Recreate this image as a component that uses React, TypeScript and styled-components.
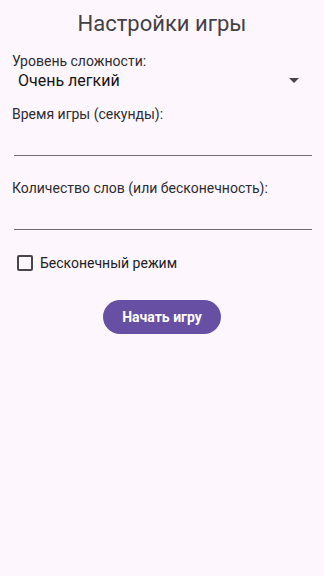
import styled, { createGlobalStyle } from 'styled-components';

const GlobalStyle = createGlobalStyle`
    html, body {
        margin: 0;
        padding: 0;
        background: #fdf7fd;
        font-family: Roboto, "Noto Sans", sans-serif;
    }
`;

const Screen = styled.div`
    width: 324px;
    min-height: 576px;
    box-sizing: border-box;
    padding: 10px 12px 0 12px;
    display: flex;
    flex-direction: column;
`;

const Title = styled.h1`
    margin: 0;
    font-size: 22px;
    font-weight: 400;
    color: #434146;
    text-align: center;
    line-height: 28px;
`;

const Label = styled.div<{ $top: number }>`
    margin-top: ${(p) => p.$top}px;
    font-size: 14px;
    color: #2e2c30;
    line-height: 18px;
`;

const Spinner = styled.div`
    display: flex;
    align-items: center;
    justify-content: space-between;
    padding: 0 13px 0 6px;
    height: 20px;
    font-size: 16px;
    color: #141414;
`;

const Arrow = styled.span`
    width: 0;
    height: 0;
    border-left: 5px solid transparent;
    border-right: 5px solid transparent;
    border-top: 5px solid #49454f;
`;

const Field = styled.div`
    margin: 0 0 0 2px;
    height: 32px;
    border-bottom: 1.5px solid #6f6c72;
`;

const CheckRow = styled.label`
    display: flex;
    align-items: center;
    gap: 7px;
    margin-top: 25px;
    padding-left: 5px;
    font-size: 14px;
    color: #222024;
`;

const Box = styled.span`
    width: 12px;
    height: 12px;
    border: 2px solid #49454f;
    border-radius: 2px;
`;

const StartButton = styled.button`
    align-self: center;
    margin-top: 29px;
    width: 118px;
    height: 34px;
    border: none;
    border-radius: 17px;
    background: #6750a4;
    color: #ffffff;
    font-family: Roboto, "Noto Sans", sans-serif;
    font-size: 14px;
    font-weight: 700;
`;

const App = () => {
    return (
        <>
            <GlobalStyle />
            <Screen>
                <Title>Настройки игры</Title>
                <Label $top={14}>Уровень сложности:</Label>
                <Spinner>
                    <span>Очень легкий</span>
                    <Arrow />
                </Spinner>
                <Label $top={15}>Время игры (секунды):</Label>
                <Field />
                <Label $top={23}>Количество слов (или бесконечность):</Label>
                <Field />
                <CheckRow>
                    <Box />
                    Бесконечный режим
                </CheckRow>
                <StartButton>Начать игру</StartButton>
            </Screen>
        </>
    );
};

export default App;
